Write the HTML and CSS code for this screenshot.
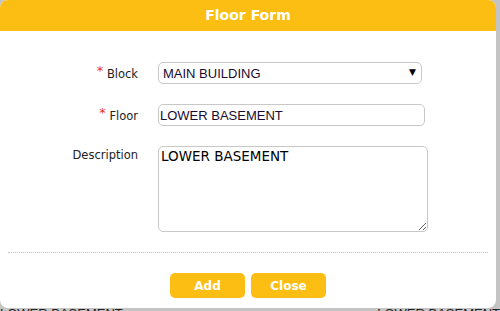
FILE: index.html
```html
<!DOCTYPE html>
<html lang="en">
<head>
    <meta charset="UTF-8">
    <meta name="viewport" content="width=device-width, initial-scale=1.0">
    <title>Floor Form</title>
    <link rel="stylesheet" href="styles.css">
</head>
<body>
    <div class="dialog">
        <div class="dialog-title">Floor Form</div>
        <form class="floor-form">
            <div class="form-row">
                <label for="block"><span class="req">*</span> Block</label>
                <div class="select-wrap">
                    <select id="block" class="field field-select">
                        <option>MAIN BUILDING</option>
                    </select>
                    <span class="select-arrow">&#9660;</span>
                </div>
            </div>
            <div class="form-row">
                <label for="floor"><span class="req">*</span> Floor</label>
                <input type="text" id="floor" class="field field-input" value="LOWER BASEMENT">
            </div>
            <div class="form-row">
                <label for="description">Description</label>
                <textarea id="description" class="field field-area">LOWER BASEMENT</textarea>
            </div>
            <div class="separator"></div>
            <div class="actions">
                <button type="button" class="btn">Add</button>
                <button type="button" class="btn">Close</button>
            </div>
        </form>
    </div>
    <div class="behind">
        <span>LOWER BASEMENT</span>
        <span>LOWER BASEMENT</span>
    </div>
</body>
</html>
```

FILE: styles.css
```css
body {
    margin: 0;
    width: 500px;
    height: 311px;
    overflow: hidden;
    background-color: #c4c4c4;
    font-family: 'DejaVu Sans', sans-serif;
}
.dialog {
    width: 496px;
    height: 308px;
    background-color: #ffffff;
    border-radius: 8px;
    overflow: hidden;
}
.dialog-title {
    height: 31px;
    line-height: 31px;
    background-color: #fdbe14;
    color: #ffffff;
    font-weight: bold;
    font-size: 14px;
    text-align: center;
}
.floor-form {
    padding-top: 31px;
}
.form-row {
    display: grid;
    grid-template-columns: 138px 1fr;
    column-gap: 20px;
    align-items: start;
    margin-bottom: 20px;
}
.form-row label {
    text-align: right;
    font-size: 11.5px;
    color: #222;
    padding-top: 2px;
    line-height: 14px;
}
.req {
    color: #e8322a;
    font-size: 13px;
    vertical-align: 3px;
}
.field {
    box-sizing: border-box;
    border: 1px solid #c8c8c8;
    border-radius: 5px;
    background: #fff;
    color: #1a0a30;
    margin: 0;
}
.select-wrap {
    position: relative;
    width: 264px;
}
.field-select {
    appearance: none;
    -webkit-appearance: none;
    display: block;
    width: 264px;
    height: 22px;
    font-family: 'Liberation Sans', Arial, sans-serif;
    font-size: 13px;
    padding: 0 20px 0 4px;
}
.select-arrow {
    position: absolute;
    right: 6px;
    top: 5px;
    font-size: 9px;
    color: #000;
    pointer-events: none;
}
.field-input {
    width: 267px;
    height: 22px;
    font-family: 'Liberation Sans', Arial, sans-serif;
    font-size: 13px;
    padding: 0 1px;
}
.field-area {
    width: 270px;
    height: 86px;
    font-family: 'DejaVu Sans', sans-serif;
    font-size: 13.5px;
    padding: 1px 2px;
    color: #000;
    resize: both;
}
.separator {
    margin: 0 8px;
    border-top: 1px dotted #c4c4c4;
}
.actions {
    display: flex;
    justify-content: center;
    gap: 6px;
    margin-top: 20px;
}
.btn {
    width: 75px;
    height: 25px;
    border: none;
    border-radius: 5px;
    background-color: #fdbe14;
    color: #ffffff;
    font-family: 'DejaVu Sans', sans-serif;
    font-weight: bold;
    font-size: 12px;
    cursor: pointer;
}
.behind {
    display: flex;
    justify-content: space-between;
    font-family: 'Liberation Sans', Arial, sans-serif;
    font-size: 13px;
    color: #222;
    line-height: 12px;
}
```
